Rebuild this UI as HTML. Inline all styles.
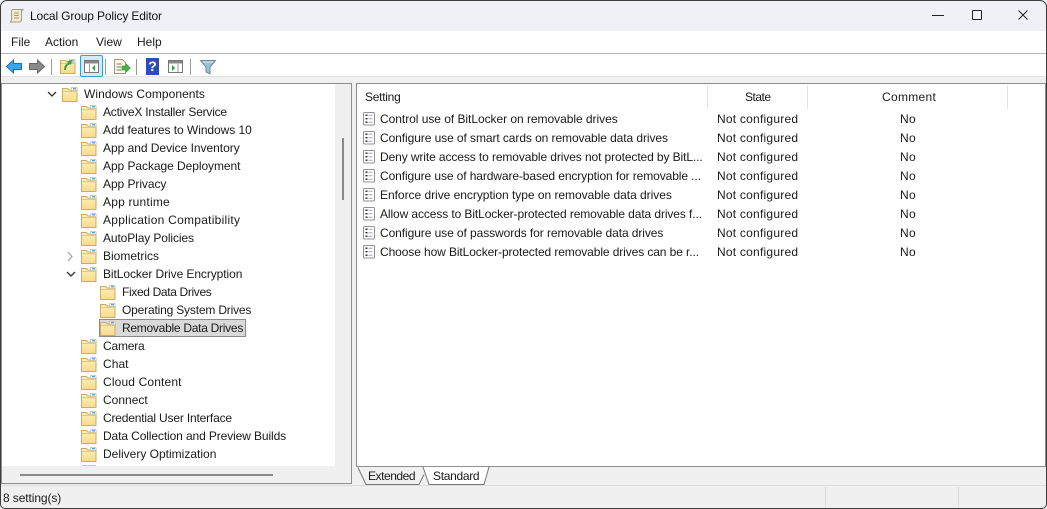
<!DOCTYPE html>
<html><head><meta charset="utf-8"><style>
html,body{margin:0;padding:0;background:#fff}
#w{position:relative;width:1047px;height:509px;overflow:hidden;background:#f0f0f0;font:12px "Liberation Sans",sans-serif;color:#1a1a1a}
#w div{position:absolute}
.t{white-space:nowrap;line-height:16px;height:16px}
svg{position:absolute;overflow:visible}
</style></head><body><div id="w">
<svg width="0" height="0" style="position:absolute"><defs>
<linearGradient id="g" x1="0" y1="0" x2="0" y2="1"><stop offset="0" stop-color="#fdeeb8"/><stop offset="1" stop-color="#f8dc8e"/></linearGradient>
<g id="f"><path d="M.5 1.500h5l1.500 1.500h8v11.500h-14.500z" fill="url(#g)" stroke="#c9ab6a"/><path d="M1 4.500h14" stroke="#e3c884"/><rect x="9.500" y=".5" width="5.500" height="3" fill="#fff" stroke="#c4b68e" stroke-width=".7"/><rect x="11" y="1" width="3" height="1.500" fill="#5aa8e6"/></g>
<g id="p"><rect x=".5" y=".5" width="11" height="12.500" rx="1" fill="#fff" stroke="#929292"/><path d="M2.500 3.200h2M2.500 6.700h2M2.500 10.200h2" stroke="#222" stroke-width="1.400"/><path d="M5.500 3.200h4M5.500 6.700h4M5.500 10.200h4" stroke="#a8a8c0"/></g>
</defs></svg>

<div style="left:0;top:0;width:1047px;height:31px;background:#eff1f7"></div>
<svg style="left:9px;top:8px" width="16" height="16"><path d="M3.500 1.500h10.500l-1.500 1.500v9.500l-1.500 1.500h-9.500l1-2V3z" fill="#f3ead0" stroke="#a89c7a"/><path d="M5 5h5M5 7.500h5M5 10h5" stroke="#a89a78"/></svg>
<div class="t" style="left:30px;top:8px;letter-spacing:-.14px;color:#111">Local Group Policy Editor</div>
<div style="left:932px;top:15px;width:12px;height:1px;background:#222"></div>
<div style="left:972px;top:10px;width:8px;height:8px;border:1px solid #222;border-radius:1px"></div>
<svg style="left:1018px;top:10px" width="10" height="10"><path d="M.5.500l9 9M9.500.500l-9 9" stroke="#222" stroke-width="1"/></svg>

<div style="left:0;top:31px;width:1047px;height:22px;background:#fff"></div>
<div class="t" style="left:11px;top:34px">File</div>
<div class="t" style="left:45px;top:34px">Action</div>
<div class="t" style="left:96px;top:34px">View</div>
<div class="t" style="left:137px;top:34px">Help</div>
<div style="left:0;top:53px;width:1047px;height:1px;background:#b4b4bc"></div>
<div style="left:0;top:54px;width:1047px;height:22px;background:#fff"></div>
<div style="left:0;top:76px;width:1047px;height:1px;background:#e2e2e2"></div>

<svg style="left:6px;top:59px" width="16" height="15"><path d="M.5 7.500L7.500 1v3.500h8v6h-8V14z" fill="#39a5ee" stroke="#1d6fb5"/></svg>
<svg style="left:29px;top:59px" width="16" height="15"><path d="M15.500 7.500L8.500 1v3.500h-8v6h8V14z" fill="#8a8a8a" stroke="#666"/></svg>
<div style="left:51px;top:59px;width:1px;height:16px;background:#999"></div>
<svg style="left:60px;top:58px" width="16" height="16"><use href="#f" y="1"/><path d="M5 12c0-4 2-6 5-7" stroke="#3aa13a" stroke-width="2" fill="none"/><path d="M7 3l5-1-1 5z" fill="#3aa13a"/></svg>
<div style="left:80px;top:55px;width:21px;height:20px;background:#d5e9f7;border:1px solid #3f9bd8;border-radius:2px"></div>
<svg style="left:84px;top:60px" width="16" height="14"><rect x=".5" y=".5" width="14" height="12" fill="#fff" stroke="#777"/><rect x="1" y="1" width="13" height="2.500" fill="#888"/><path d="M5.500 4v8" stroke="#999"/><path d="M11 5v6l-3-3z" fill="#2a9a3a"/></svg>
<div style="left:105px;top:59px;width:1px;height:16px;background:#999"></div>
<svg style="left:114px;top:59px" width="17" height="16"><path d="M.5.500h8l3 3v11h-11z" fill="#fdf8e4" stroke="#9a9a8a"/><path d="M2.500 5h5M2.500 8h5M2.500 11h5" stroke="#777"/><path d="M8 7h4V4.500L16.500 9 12 13.500V11H8z" fill="#4cb04c" stroke="#2f8a2f" stroke-width=".5"/></svg>
<div style="left:136px;top:59px;width:1px;height:16px;background:#999"></div>
<div class="t" style="left:146px;top:58px;width:13px;height:17px;line-height:17px;background:#2b4db5;color:#fff;font-weight:bold;font-size:14px;text-align:center">?</div>
<svg style="left:168px;top:60px" width="16" height="14"><rect x=".5" y=".5" width="14" height="12" fill="#fff" stroke="#777"/><rect x="1" y="1" width="13" height="2.500" fill="#888"/><path d="M10 4v8" stroke="#999"/><path d="M4 5v6l3-3z" fill="#2a9a3a"/></svg>
<div style="left:190px;top:59px;width:1px;height:16px;background:#999"></div>
<svg style="left:200px;top:60px" width="16" height="15"><path d="M.5.500h15L10 7v7l-4-2V7z" fill="#9fc0d4" stroke="#6a8797"/><path d="M3 2h10" stroke="#dfeaf1"/></svg>

<!-- left pane -->
<div style="left:1px;top:83px;width:351px;height:401px;background:#f0f0f0;border:1px solid #8e8e8e;box-sizing:border-box"></div>
<div style="left:2px;top:84px;width:333px;height:382px;background:#fff"></div>
<div style="left:342px;top:138px;width:2px;height:62px;background:#8a8a8a"></div>
<div style="left:20px;top:474px;width:253px;height:2px;background:#8a8a8a"></div>

<svg style="left:47px;top:91px" width="10" height="7"><path d="M1 1l4 4 4-4" fill="none" stroke="#333" stroke-width="1.300"/></svg>
<svg style="left:62px;top:87px" width="16" height="16"><use href="#f"/></svg>
<div class="t" style="left:84px;top:86px;letter-spacing:.05px">Windows Components</div>

<svg style="left:81px;top:105px" width="16" height="16"><use href="#f"/></svg><div class="t" style="left:103px;top:104px;letter-spacing:-.22px">ActiveX Installer Service</div>
<svg style="left:81px;top:123px" width="16" height="16"><use href="#f"/></svg><div class="t" style="left:103px;top:122px;letter-spacing:-.05px">Add features to Windows 10</div>
<svg style="left:81px;top:141px" width="16" height="16"><use href="#f"/></svg><div class="t" style="left:103px;top:140px;letter-spacing:-.03px">App and Device Inventory</div>
<svg style="left:81px;top:159px" width="16" height="16"><use href="#f"/></svg><div class="t" style="left:103px;top:158px;letter-spacing:-.06px">App Package Deployment</div>
<svg style="left:81px;top:177px" width="16" height="16"><use href="#f"/></svg><div class="t" style="left:103px;top:176px;letter-spacing:-.06px">App Privacy</div>
<svg style="left:81px;top:195px" width="16" height="16"><use href="#f"/></svg><div class="t" style="left:103px;top:194px;letter-spacing:.2px">App runtime</div>
<svg style="left:81px;top:213px" width="16" height="16"><use href="#f"/></svg><div class="t" style="left:103px;top:212px;letter-spacing:.26px">Application Compatibility</div>
<svg style="left:81px;top:231px" width="16" height="16"><use href="#f"/></svg><div class="t" style="left:103px;top:230px;letter-spacing:-.11px">AutoPlay Policies</div>
<svg style="left:67px;top:251px" width="7" height="11"><path d="M1 1l4 4.500L1 10" fill="none" stroke="#a6a6a6" stroke-width="1.300"/></svg>
<svg style="left:81px;top:249px" width="16" height="16"><use href="#f"/></svg><div class="t" style="left:103px;top:248px">Biometrics</div>
<svg style="left:66px;top:271px" width="10" height="7"><path d="M1 1l4 4 4-4" fill="none" stroke="#333" stroke-width="1.300"/></svg>
<svg style="left:81px;top:267px" width="16" height="16"><use href="#f"/></svg><div class="t" style="left:103px;top:266px;letter-spacing:-.08px">BitLocker Drive Encryption</div>
<svg style="left:100px;top:285px" width="16" height="16"><use href="#f"/></svg><div class="t" style="left:122px;top:284px;letter-spacing:-.35px">Fixed Data Drives</div>
<svg style="left:100px;top:303px" width="16" height="16"><use href="#f"/></svg><div class="t" style="left:122px;top:302px;letter-spacing:-.18px">Operating System Drives</div>
<div style="left:99px;top:319px;width:147px;height:18px;background:#d9d9d9;border:1px solid #8a8a8a;box-sizing:border-box"></div>
<svg style="left:100px;top:321px" width="16" height="16"><use href="#f"/></svg><div class="t" style="left:122px;top:320px;letter-spacing:-.27px">Removable Data Drives</div>
<svg style="left:81px;top:339px" width="16" height="16"><use href="#f"/></svg><div class="t" style="left:103px;top:338px;letter-spacing:-.2px">Camera</div>
<svg style="left:81px;top:357px" width="16" height="16"><use href="#f"/></svg><div class="t" style="left:103px;top:356px;letter-spacing:.05px">Chat</div>
<svg style="left:81px;top:375px" width="16" height="16"><use href="#f"/></svg><div class="t" style="left:103px;top:374px;letter-spacing:.15px">Cloud Content</div>
<svg style="left:81px;top:393px" width="16" height="16"><use href="#f"/></svg><div class="t" style="left:103px;top:392px">Connect</div>
<svg style="left:81px;top:411px" width="16" height="16"><use href="#f"/></svg><div class="t" style="left:103px;top:410px;letter-spacing:-.18px">Credential User Interface</div>
<svg style="left:81px;top:429px" width="16" height="16"><use href="#f"/></svg><div class="t" style="left:103px;top:428px;letter-spacing:-.11px">Data Collection and Preview Builds</div>
<svg style="left:81px;top:447px" width="16" height="16"><use href="#f"/></svg><div class="t" style="left:103px;top:446px">Delivery Optimization</div>
<div style="left:82px;top:465px;width:14px;height:1px;background:#e0c77f"></div>

<!-- right pane -->
<div style="left:356px;top:83px;width:690px;height:384px;background:#fff;border:1px solid #8e8e8e;box-sizing:border-box"></div>
<div style="left:707px;top:85px;width:1px;height:24px;background:#e5e5e5"></div>
<div style="left:807px;top:85px;width:1px;height:24px;background:#e5e5e5"></div>
<div style="left:1007px;top:85px;width:1px;height:24px;background:#e5e5e5"></div>
<div class="t" style="left:365px;top:89px;letter-spacing:-.27px">Setting</div>
<div class="t" style="left:745px;top:89px;letter-spacing:-.5px">State</div>
<div class="t" style="left:882px;top:89px;letter-spacing:.3px">Comment</div>

<svg style="left:363px;top:112px" width="13" height="14"><use href="#p"/></svg><div class="t" style="left:380px;top:111px;letter-spacing:-.04px">Control use of BitLocker on removable drives</div><div class="t" style="left:717px;top:111px;letter-spacing:.23px">Not configured</div><div class="t" style="left:900px;top:111px;letter-spacing:.3px">No</div>
<svg style="left:363px;top:131px" width="13" height="14"><use href="#p"/></svg><div class="t" style="left:380px;top:130px;letter-spacing:-.08px">Configure use of smart cards on removable data drives</div><div class="t" style="left:717px;top:130px;letter-spacing:.23px">Not configured</div><div class="t" style="left:900px;top:130px;letter-spacing:.3px">No</div>
<svg style="left:363px;top:150px" width="13" height="14"><use href="#p"/></svg><div class="t" style="left:380px;top:149px;letter-spacing:-.1px">Deny write access to removable drives not protected by BitL...</div><div class="t" style="left:717px;top:149px;letter-spacing:.23px">Not configured</div><div class="t" style="left:900px;top:149px;letter-spacing:.3px">No</div>
<svg style="left:363px;top:169px" width="13" height="14"><use href="#p"/></svg><div class="t" style="left:380px;top:168px;letter-spacing:-.1px">Configure use of hardware-based encryption for removable ...</div><div class="t" style="left:717px;top:168px;letter-spacing:.23px">Not configured</div><div class="t" style="left:900px;top:168px;letter-spacing:.3px">No</div>
<svg style="left:363px;top:188px" width="13" height="14"><use href="#p"/></svg><div class="t" style="left:380px;top:187px;letter-spacing:-.03px">Enforce drive encryption type on removable data drives</div><div class="t" style="left:717px;top:187px;letter-spacing:.23px">Not configured</div><div class="t" style="left:900px;top:187px;letter-spacing:.3px">No</div>
<svg style="left:363px;top:207px" width="13" height="14"><use href="#p"/></svg><div class="t" style="left:380px;top:206px;letter-spacing:-.1px">Allow access to BitLocker-protected removable data drives f...</div><div class="t" style="left:717px;top:206px;letter-spacing:.23px">Not configured</div><div class="t" style="left:900px;top:206px;letter-spacing:.3px">No</div>
<svg style="left:363px;top:226px" width="13" height="14"><use href="#p"/></svg><div class="t" style="left:380px;top:225px;letter-spacing:-.08px">Configure use of passwords for removable data drives</div><div class="t" style="left:717px;top:225px;letter-spacing:.23px">Not configured</div><div class="t" style="left:900px;top:225px;letter-spacing:.3px">No</div>
<svg style="left:363px;top:245px" width="13" height="14"><use href="#p"/></svg><div class="t" style="left:380px;top:244px;letter-spacing:-.1px">Choose how BitLocker-protected removable drives can be r...</div><div class="t" style="left:717px;top:244px;letter-spacing:.23px">Not configured</div><div class="t" style="left:900px;top:244px;letter-spacing:.3px">No</div>

<!-- tabs -->
<svg style="left:356px;top:467px" width="140" height="20"><path d="M2 .5l8 17h53l5-10" fill="#f0f0f0" stroke="#777"/><path d="M67 0l6 17.500h55l5-17.500" fill="#fff" stroke="#777"/></svg>
<div class="t" style="left:368px;top:468px;letter-spacing:-.45px">Extended</div>
<div class="t" style="left:433px;top:468px;letter-spacing:-.3px">Standard</div>

<!-- status -->
<div style="left:0;top:485px;width:1047px;height:1px;background:#dcdcdc"></div>
<div style="left:825px;top:487px;width:1px;height:20px;background:#d8d8d8"></div>
<div style="left:958px;top:487px;width:1px;height:20px;background:#d8d8d8"></div>
<div class="t" style="left:3px;top:490px;letter-spacing:-.1px">8 setting(s)</div>

<!-- window edge -->
<div style="left:0;top:0;width:1047px;height:509px;box-sizing:border-box;border:1px solid #3c3c3c;border-radius:7px 7px 5px 5px"></div>
</div></body></html>
